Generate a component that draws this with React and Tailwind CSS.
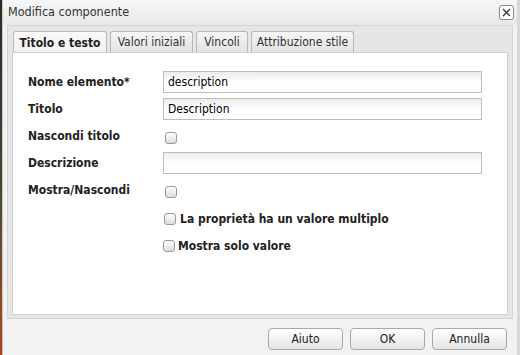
import React from 'react';

const Checkbox = () => (
  <span className="inline-block w-[12px] h-[12px] rounded-[3px] border border-[#9a9a9a] bg-gradient-to-b from-white to-[#dcdcdc]" />
);

const TextInput = ({ value }) => (
  <div className="w-[319px] h-[22px] border border-[#bdbdbd] bg-gradient-to-b from-[#ececec] to-white to-50% px-[4px] flex items-center text-[12px] text-black">
    {value}
  </div>
);

export default function App() {
  const font = { fontFamily: '"DejaVu Sans Condensed", Tahoma, "Liberation Sans", sans-serif' };
  const tabs = [
    { label: 'Titolo e testo', active: true, w: 'w-[94px]' },
    { label: 'Valori iniziali', w: 'w-[83px]' },
    { label: 'Vincoli', w: 'w-[52px]' },
    { label: 'Attribuzione stile', w: 'w-[103px]' },
  ];
  const rows = [
    { label: 'Nome elemento*', input: 'description' },
    { label: 'Titolo', input: 'Description' },
    { label: 'Nascondi titolo', check: true },
    { label: 'Descrizione', input: '' },
    { label: 'Mostra/Nascondi', check: true },
  ];

  return (
    <div className="w-[520px] h-[355px] flex bg-[#1e2a1c] overflow-hidden" style={font}>
      <div className="w-[2px] bg-gradient-to-b from-[#2a2a2a] via-[#3b4a30] to-[#b0401c]" />
      <div className="flex-1 flex flex-col bg-[#f2f2f2] border-l border-[#c8c8c8] border-r-[3px] border-r-[#d8d8d8]">
        {/* title bar */}
        <div className="h-[25px] flex items-center justify-between pl-[5px] pr-[3px] bg-gradient-to-b from-[#f7f7f7] to-[#e8e8e8]">
          <span className="text-[12.5px] text-[#333]">Modifica componente</span>
          <span className="w-[15px] h-[15px] border border-[#8a8a8a] rounded-[3px] bg-white flex items-center justify-center">
            <svg width="9" height="9" viewBox="0 0 9 9">
              <path d="M1 1L8 8M8 1L1 8" stroke="#333" strokeWidth="1.3" />
            </svg>
          </span>
        </div>

        {/* tab panel */}
        <div className="mx-[4px] h-[294px] border border-[#d4d4d4] bg-[#e6e6e6] px-[4px] pt-[5px] pb-[3px] flex flex-col">
          <div className="flex gap-[3px] pl-[1px] h-[21px]">
            {tabs.map((t) => (
              <div
                key={t.label}
                className={`${t.w} h-[21px] flex items-center justify-center text-[12px] rounded-t-[3px] border border-b-0 ${
                  t.active
                    ? 'bg-gradient-to-b from-[#fafafa] to-[#f0f0f0] border-[#b8b8b8] font-bold text-[#222] h-[22px]'
                    : 'bg-gradient-to-b from-[#f6f6f6] to-[#e2e2e2] border-[#b8b8b8] text-[#333]'
                }`}
              >
                {t.label}
              </div>
            ))}
          </div>
          <div className="flex-1 bg-white border border-[#cfcfcf] pl-[15px] pt-[18px]">
            <div className="flex flex-col gap-[5px]">
              {rows.map((r) => (
                <div key={r.label} className="flex items-center h-[22px]">
                  <span className="w-[135px] text-[12px] font-bold text-[#222] -mt-[1px]">{r.label}</span>
                  {r.check ? (
                    <span className="ml-[2px] mt-[3px] flex"><Checkbox /></span>
                  ) : (
                    <TextInput value={r.input} />
                  )}
                </div>
              ))}
            </div>
            <div className="ml-[136px] mt-[9px] flex flex-col gap-[10px]">
              <div className="flex items-center gap-[4px] h-[17px]">
                <Checkbox />
                <span className="text-[12px] font-bold text-[#222]">La proprietà ha un valore multiplo</span>
              </div>
              <div className="flex items-center gap-[3px] h-[17px] -ml-[1px]">
                <Checkbox />
                <span className="text-[12px] font-bold text-[#222]">Mostra solo valore</span>
              </div>
            </div>
          </div>
        </div>

        {/* buttons */}
        <div className="flex justify-end gap-[7px] pr-[10px] pt-[9px]">
          {['Aiuto', 'OK', 'Annulla'].map((b) => (
            <div
              key={b}
              className="w-[75px] h-[22px] rounded-[4px] border border-[#a8a8a8] bg-gradient-to-b from-white to-[#e4e4e4] flex items-center justify-center text-[12px] text-[#222]"
            >
              {b}
            </div>
          ))}
        </div>
      </div>
    </div>
  );
}
